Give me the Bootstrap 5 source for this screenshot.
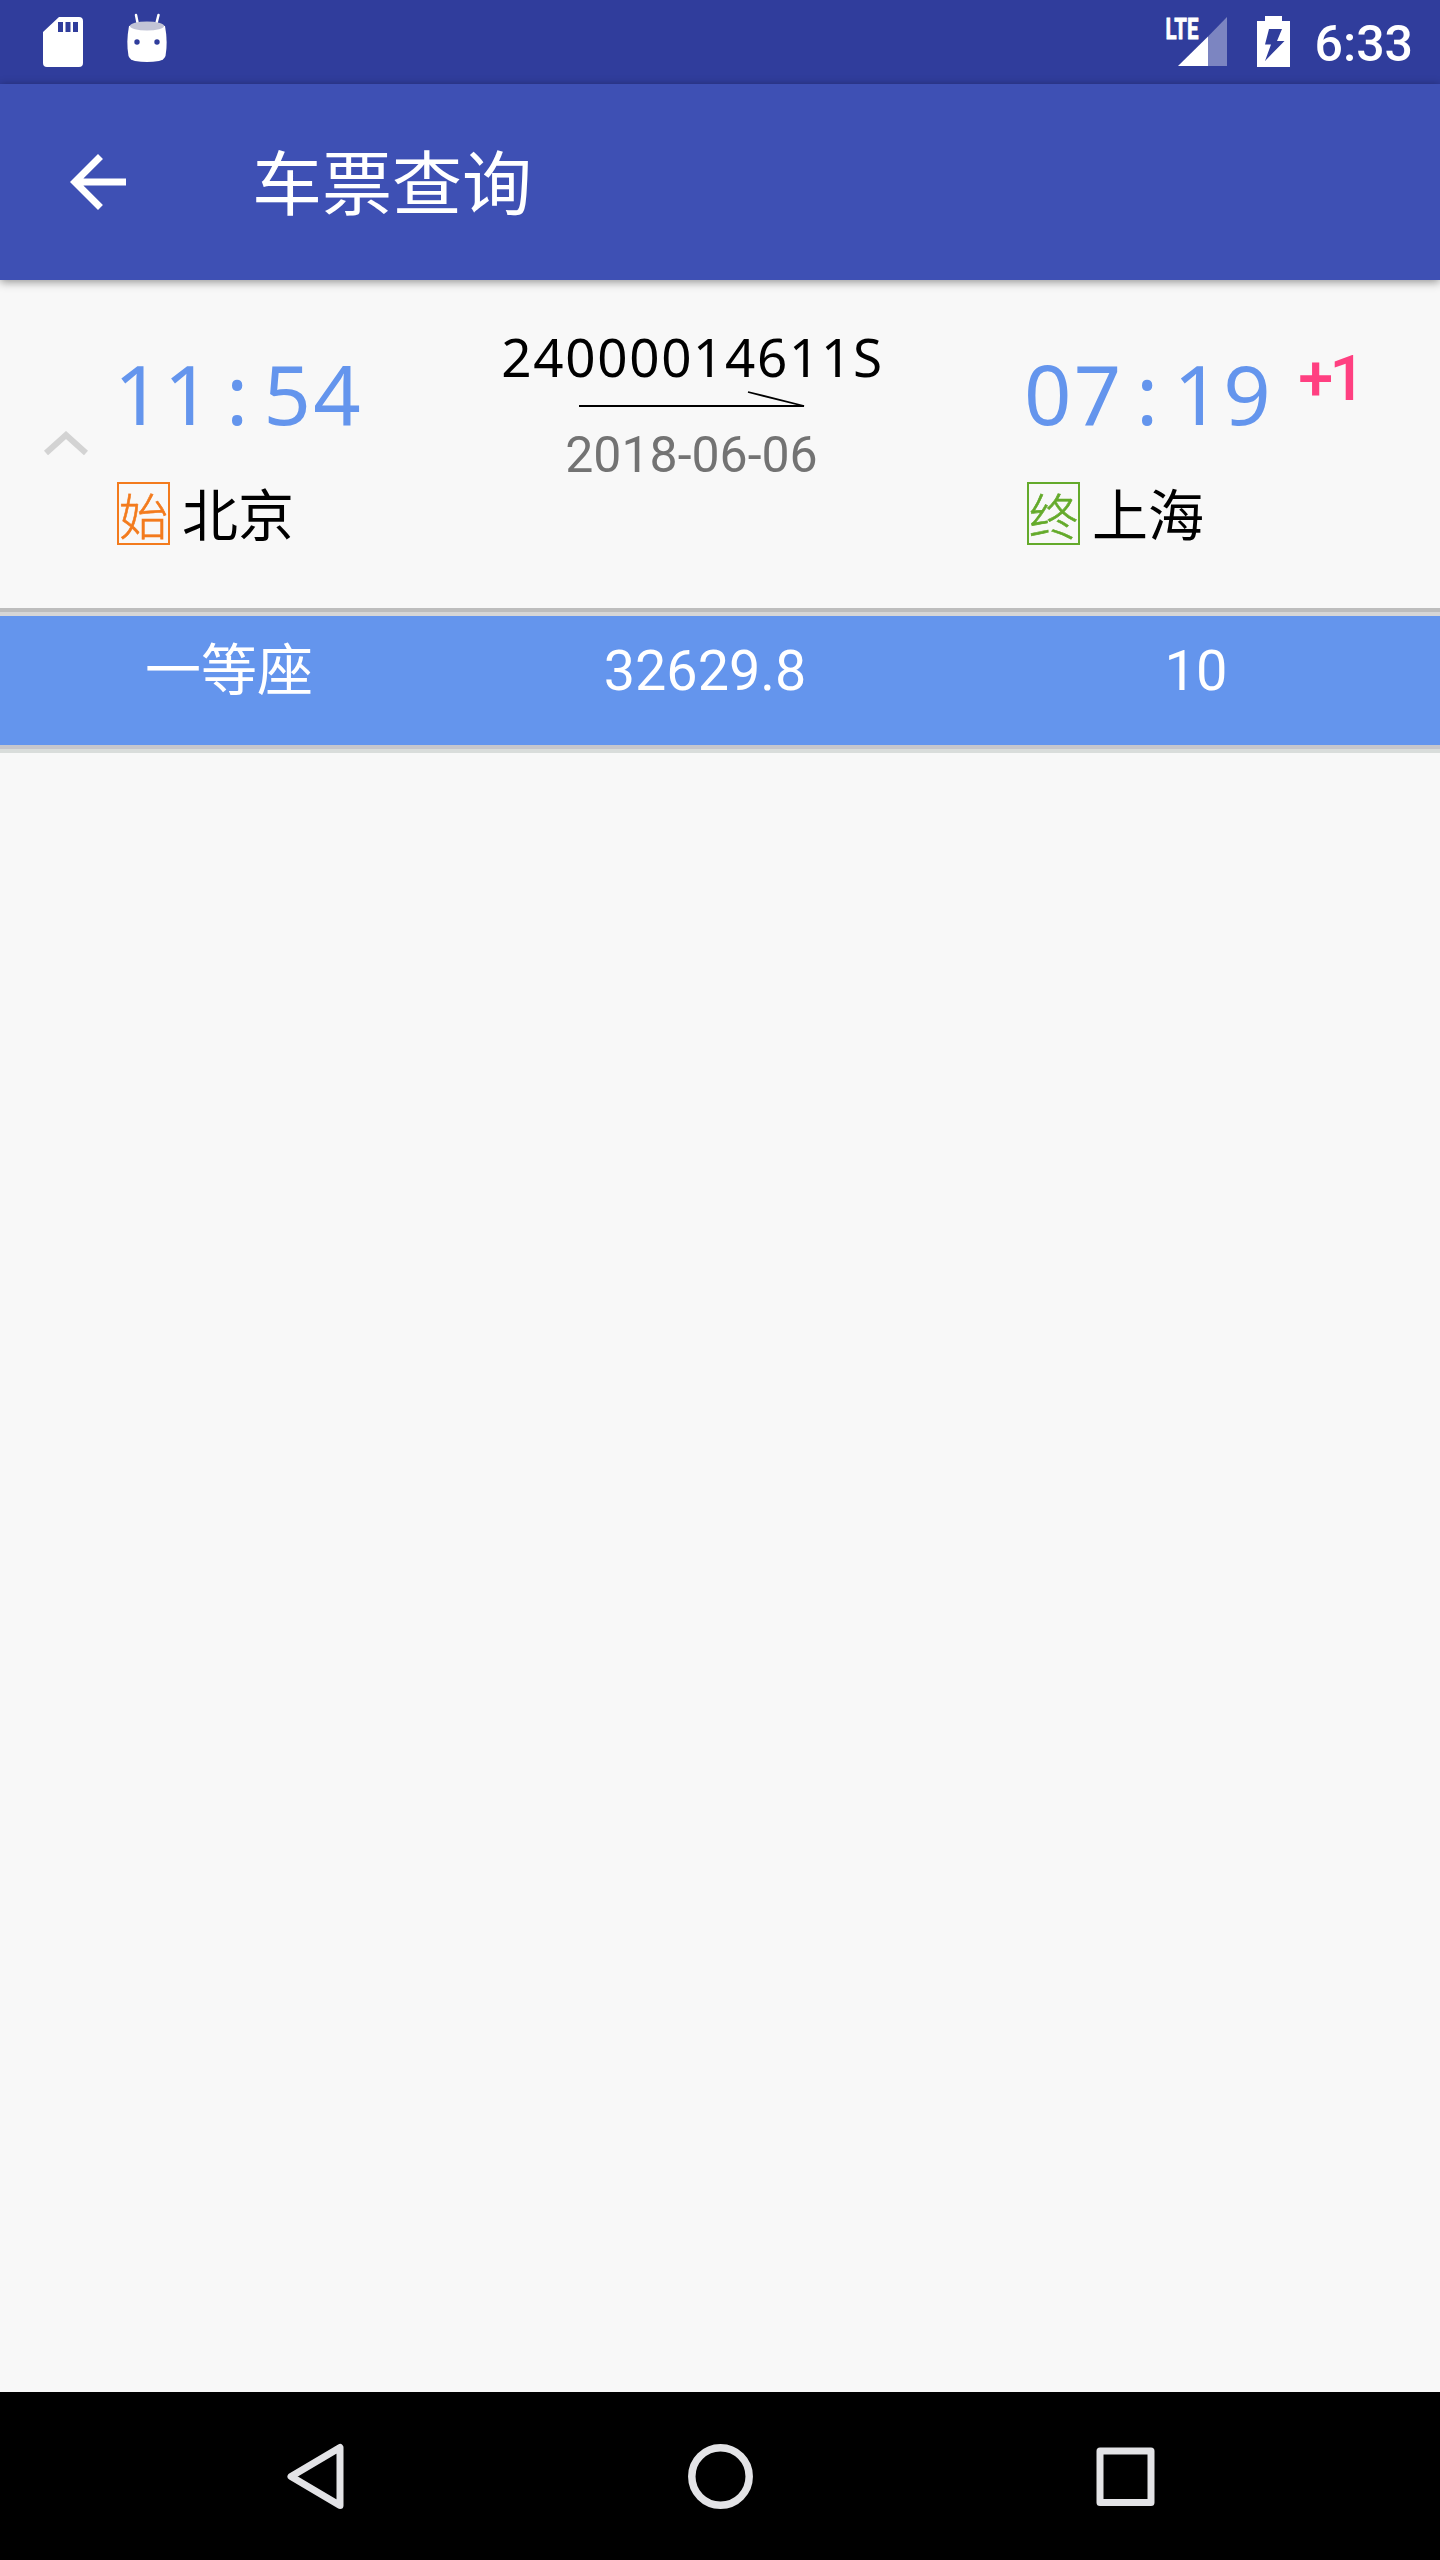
<!DOCTYPE html>
<html lang="zh-CN">
<head>
<meta charset="utf-8">
<meta name="viewport" content="width=device-width, initial-scale=1">
<title>车票查询</title>
<link href="https://cdn.jsdelivr.net/npm/bootstrap@5.3.0/dist/css/bootstrap.min.css" rel="stylesheet">
<style>
  body { font-family: Roboto, "Noto Sans CJK SC", sans-serif; background: #f8f8f8; color: #000; }
  svg { display: block; flex: none; }
  .screen { width: 1440px; height: 2560px; }
  .status-bar { height: 84px; background: #303d9c; padding: 0 27px 0 43px; }
  .clock { font-size: 50px; font-weight: 500; line-height: 60px; margin: 14px 0 0 24px; }
  .app-bar { height: 196px; background: #3e50b4; padding-left: 56px; box-shadow: 0 2px 9px rgba(0,0,0,.42); z-index: 1; }
  .app-title { font-family: "Noto Sans CJK SC", sans-serif; font-size: 70px; line-height: 100px; margin: -5px 0 0 112px; font-weight: 400; }
  .trip { height: 328px; }
  .toggle-col { width: 117px; padding: 151px 0 0 43px; }
  .depart-col { width: 375px; padding-top: 63px; }
  .train-col { width: 400px; padding-top: 45px; }
  .arrive-col { margin-left: 135px; padding-top: 63px; }
  .trip-time { font-family: "Noto Sans", sans-serif; font-size: 83px; line-height: 100px; letter-spacing: 2.3px; margin-left: -3px; color: #6495ed; white-space: nowrap; }
  .trip-time span { display: inline-block; width: 50px; text-align: center; padding-right: 3px; letter-spacing: 0; }
  .next-day { font-size: 63px; font-weight: 500; line-height: 74px; color: #ff4081; margin: -1px 0 0 25px; letter-spacing: -3.5px; }
  .station { margin-top: 39px; font-family: "Noto Sans CJK SC", sans-serif; font-size: 56px; line-height: 60px; gap: 12px; }
  .stop-tag { width: 53px; height: 63px; border: 2.5px solid; font-size: 49px; font-weight: 300; line-height: 59px; -webkit-text-stroke: .6px currentColor; }
  .tag-start { color: #f37b1d; }
  .tag-end { color: #64aa2b; }
  .train-no { font-family: "Noto Sans", sans-serif; font-size: 53px; line-height: 64px; letter-spacing: 1.65px; white-space: nowrap; padding-left: 1px; }
  .trip-date { font-size: 50px; line-height: 60px; margin-top: 9px; margin-left: -1px; color: #737373; }
  .rule { height: 8px; background: linear-gradient(#bdbdbd 0 4px, #d6d6d6 4px); }
  .rule-end { background: linear-gradient(#c6c6cc 0 4px, #d9dddb 4px); }
  .seat { height: 129px; background: #6495ed; font-size: 56px; line-height: 66px; padding: 22px 0 0; }
  .seat-type { width: 458px; }
  .seat-price { width: 494px; font-size: 55.7px; }
  .seat-left { width: 488px; }
  .nav-keys { height: 168px; padding-left: 287px; }
</style>
<script src="https://cdn.jsdelivr.net/npm/bootstrap@5.3.0/dist/js/bootstrap.bundle.min.js"></script>
</head>
<body>
<div class="screen d-flex flex-column overflow-hidden">
  <div class="status-bar d-flex align-items-start text-white">
    <svg width="125" height="84" viewBox="43 0 125 84">
      <path fill="#fff" fill-rule="evenodd" d="M59 17H79Q83 17 83 21V63Q83 67 79 67H47Q43 67 43 63V32ZM58 22V32H63V22ZM65.500 22V32H70.500V22ZM73 22V32H78V22Z"/>
      <path d="M136 15L138 25M158.500 15L156 25" stroke="#fff" stroke-width="2.500" stroke-linecap="round"/>
      <path fill="#fff" d="M129 26Q147 20 165 26Q168 42 165.500 56Q164 60 159 61Q147 63 135 61Q130 60 128.500 56Q126 42 129 26Z"/>
      <ellipse cx="147" cy="26" rx="17" ry="4.500" fill="#c2c4d6"/>
      <circle cx="137" cy="42" r="2.700" fill="#303d9c"/><circle cx="157" cy="42" r="2.700" fill="#303d9c"/>
    </svg>
    <svg class="ms-auto" width="126" height="84" viewBox="1165 0 126 84">
      <text x="1165.500" y="39" font-family="Roboto, sans-serif" font-size="29.500" font-weight="700" fill="#fff" stroke="#fff" stroke-width=".8" textLength="33" lengthAdjust="spacingAndGlyphs">LTE</text>
      <path d="M1208 66V36.500L1227 17V66Z" fill="#7c85c1"/>
      <path d="M1178 66L1208 36.500V66Z" fill="#fff"/>
      <path fill="#fff" fill-rule="evenodd" d="M1265 16H1282V21H1290V67H1257V21H1265ZM1269 29L1265 44.500H1271L1265 61L1284.500 41H1277L1282 29Z"/>
    </svg>
    <div class="clock">6:33</div>
  </div>

  <header class="app-bar d-flex align-items-center text-white position-relative">
    <svg width="84" height="84" viewBox="0 0 24 24" fill="#fff"><path d="M20 11H7.830l5.590-5.590L12 4l-8 8 8 8 1.410-1.410L7.830 13H20v-2z"/></svg>
    <h1 class="app-title">车票查询</h1>
  </header>

  <main class="flex-grow-1">
    <section class="trip d-flex align-items-start">
      <div class="toggle-col">
        <svg width="46" height="26" viewBox="0 0 46 26"><path d="M3 22L23 4L43 22" fill="none" stroke="#d3d3d3" stroke-width="6"/></svg>
      </div>
      <div class="depart-col">
        <div class="trip-time">11<span>:</span>54</div>
        <div class="station d-flex"><div class="stop-tag tag-start text-center">始</div><div>北京</div></div>
      </div>
      <div class="train-col d-flex flex-column align-items-center">
        <div class="train-no">24000014611S</div>
        <svg width="228" height="27" viewBox="0 1 228 27"><path d="M1 18H226L170 4" fill="none" stroke="#000" stroke-width="1.800"/></svg>
        <div class="trip-date">2018-06-06</div>
      </div>
      <div class="arrive-col">
        <div class="d-flex align-items-start">
          <div class="trip-time">07<span>:</span>19</div>
          <div class="next-day">+1</div>
        </div>
        <div class="station d-flex"><div class="stop-tag tag-end text-center">终</div><div>上海</div></div>
      </div>
    </section>
    <div class="rule"></div>
    <section class="seat d-flex text-white text-center">
      <div class="seat-type">一等座</div>
      <div class="seat-price">32629.8</div>
      <div class="seat-left">10</div>
    </section>
    <div class="rule rule-end"></div>
  </main>

  <nav class="nav-keys bg-black d-flex align-items-center">
    <svg width="868" height="168" viewBox="287 0 868 168" fill="none" stroke="#e3e3e6" stroke-width="7" stroke-linejoin="round">
      <path d="M340 55.500V113.500L291 84.500Z"/>
      <circle cx="720.500" cy="84.500" r="28.700" stroke-width="7.500"/>
      <rect x="1100" y="59" width="51" height="51.500"/>
    </svg>
  </nav>
</div>
</body>
</html>
